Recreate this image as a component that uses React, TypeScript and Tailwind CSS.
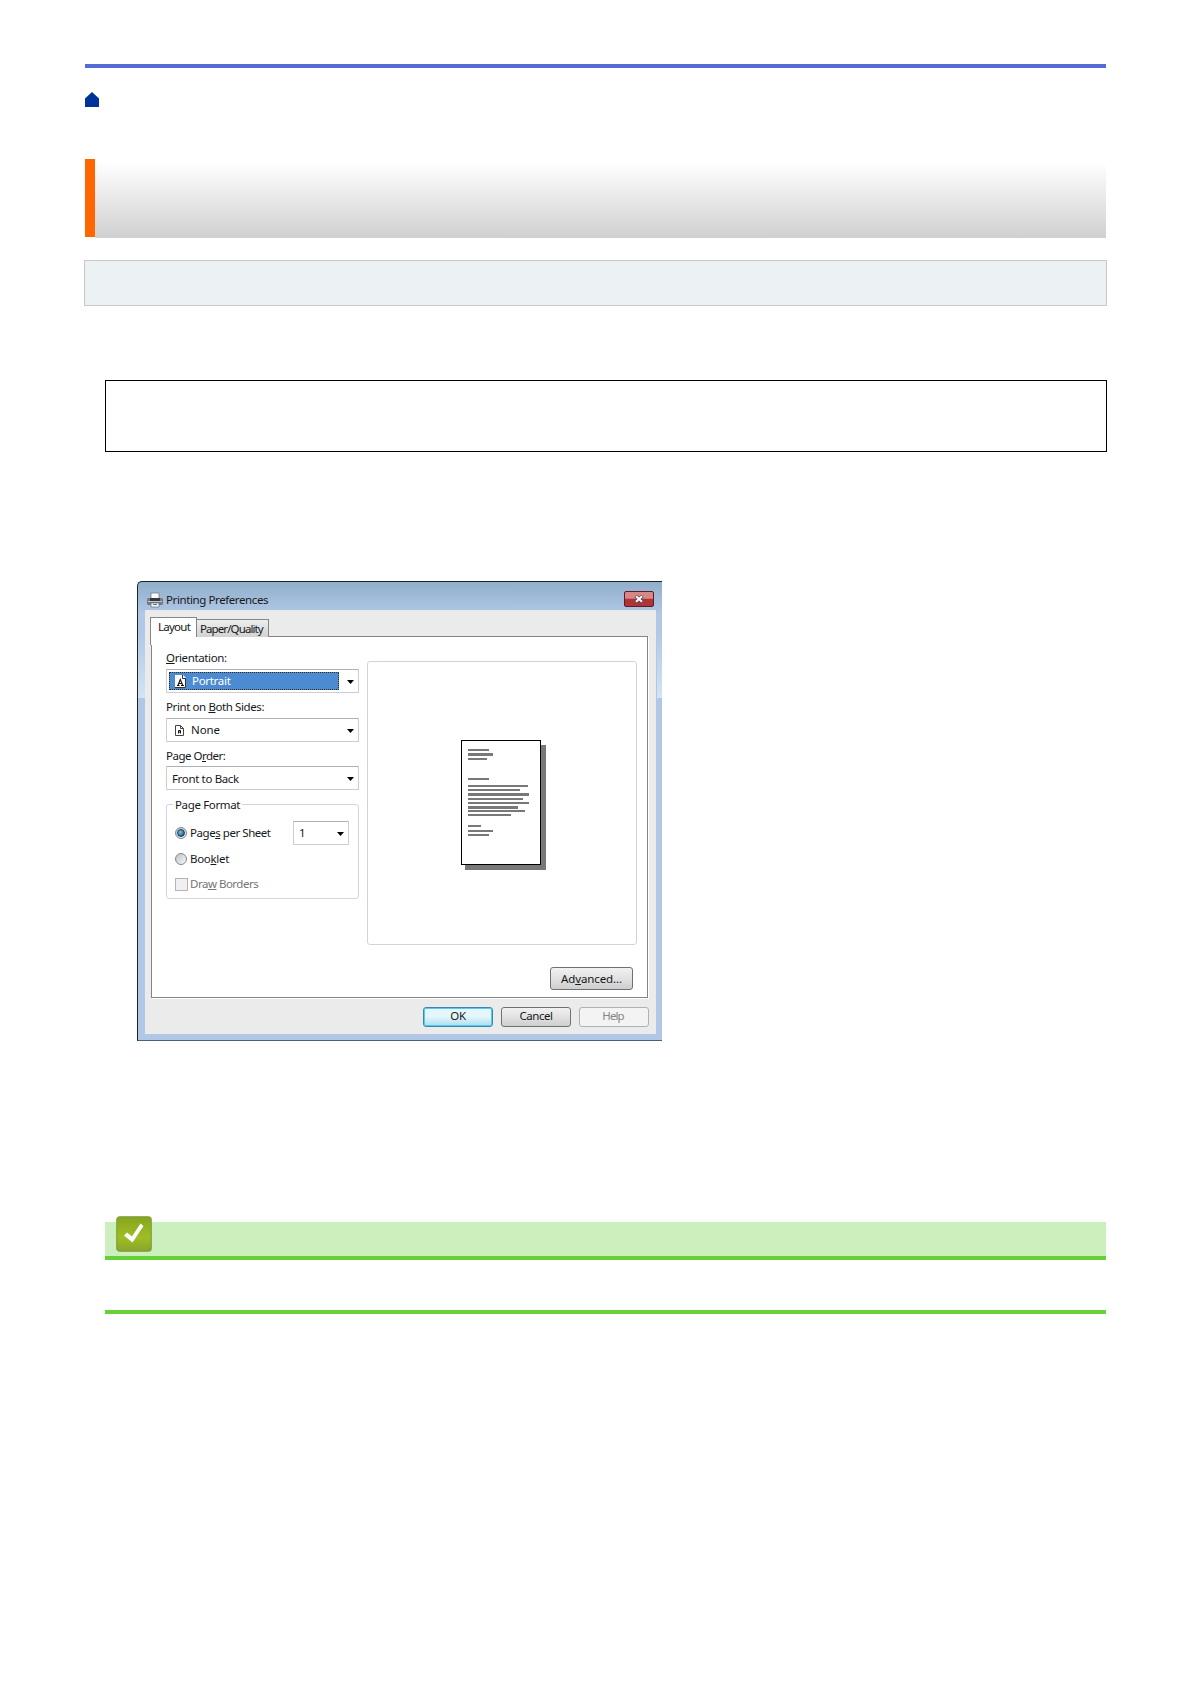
import type { ReactNode } from 'react';
import clsx from 'clsx';

// grey text lines on the preview sheet: [top, width, height]
const previewLines = [
  [8, 21, 2], [12, 25, 3], [17, 19, 2],
  [37, 21, 2],
  [44, 60, 2], [48, 52, 2], [52, 61, 3], [57, 55, 2], [61, 61, 2], [65, 50, 3], [69, 57, 2], [73, 43, 2],
  [84, 13, 2], [89, 25, 2], [93, 21, 2],
];

function PrinterIcon() {
  return (
    <svg width="16" height="16" viewBox="0 0 16 16">
      <rect x="4" y="1" width="8" height="6" fill="#f8fafb" stroke="#77808a" strokeWidth=".8" />
      <path d="M1 6h2v2h10V6h2l1 1v5l-1 1H1l-1-1V7z" fill="#777b80" />
      <path d="M3 6h10v3H3z" fill="#35393e" />
      <path d="M1 9h14v1H1z" fill="#c4c8cc" />
      <path d="M4 11h8v4H4z" fill="#f1f6fa" stroke="#59636c" strokeWidth=".6" />
      <path d="M6 12h4v1H6z" fill="#55809b" />
    </svg>
  );
}

function PageIcon({ small }: { small?: boolean }) {
  if (small) {
    return (
      <svg width="9" height="11" viewBox="0 0 9 11">
        <path d="M.5.5h5l3 3v7h-8z" fill="#fff" stroke="#444" />
        <path d="M5.5.5v3h3" fill="none" stroke="#444" />
        <path d="M3.5 8.5V5.5h2v3M3.5 7h2" fill="none" stroke="#111" />
      </svg>
    );
  }
  return (
    <svg width="11" height="13" viewBox="0 0 11 13">
      <path d="M0 0h8l3 3v10H0z" fill="#fff" />
      <path d="M7.5 0v3.5H11M10.5 3v9.5H0" fill="none" stroke="#333" />
      <path d="M2 10.5h2.5M6 10.5h3M3 10.2L5.3 4.5l2.4 5.7M4 8.5h3" fill="none" stroke="#111" strokeWidth="1.1" />
    </svg>
  );
}

function Combo({ children, className }: { children: ReactNode; className?: string }) {
  return (
    <div className={clsx('flex h-6 items-center justify-between rounded-[1px] border border-[#cbcdd2] border-t-[#aeb0b6] bg-white pr-1', className)}>
      {children}
      <svg className="mt-px" width="7" height="4" viewBox="0 0 7 4"><path d="M0 0h7L3.5 4z" fill="#000" /></svg>
    </div>
  );
}

function Radio({ checked }: { checked?: boolean }) {
  return (
    <span className="flex size-3 items-center justify-center rounded-full border border-[#858789] bg-linear-to-br from-[#bfc2c5] to-[#f8f8f8]">
      {checked && <span className="size-2 rounded-full border border-[#173f61] bg-radial-[at_35%_35%] from-[#74c5e8] to-[#123e65]" />}
    </span>
  );
}

function Button({ children, className }: { children: ReactNode; className?: string }) {
  return (
    <button className={clsx('flex items-center justify-center rounded-[3px] border', className ?? 'border-[#707070] bg-linear-to-b from-[#f1f1f1] via-[#e2e2e2] via-50% to-[#cecece]')}>
      {children}
    </button>
  );
}

function PrintingPreferences() {
  return (
    <div className="relative ml-[137px] flex h-[460px] w-[525px] flex-col rounded-tl-[5px] border border-r-0 border-[#17242c] border-b-[#466372] bg-[#b0c8e5] pl-[7px] pr-[6px] font-['Noto_Sans',sans-serif] text-[11.5px] leading-4 text-[#17181a] bg-linear-to-b from-[#91aecb] to-[#b0c8e5] to-7%">
      {/* glass reflections on the side frames */}
      <span className="absolute top-[50px] left-0 h-[66px] w-[7px] bg-linear-to-b from-transparent to-[#d3e4f3]" />
      <span className="absolute top-[50px] right-0 h-[66px] w-[5px] bg-linear-to-b from-transparent to-[#d3e4f3]" />

      <div className="flex h-7 shrink-0 items-center pt-2 pl-0.5">
        <PrinterIcon />
        <span className="ml-[3px] tracking-[-0.4px]">Printing Preferences</span>
        <div className="mt-[-2px] mr-[2px] ml-auto flex h-4 w-[30px] items-center justify-center rounded-[2px] border border-[#5b1d2b] bg-linear-to-b from-[#d98786] from-45% to-[#ae3435] to-50%">
          <svg width="10" height="8" viewBox="0 0 10 8">
            <path d="M1.5 1l7 6M8.5 1l-7 6" stroke="#5a4858" strokeWidth="3.5" />
            <path d="M2 1.3l6 5.4M8 1.3L2 6.7" stroke="#fff" strokeWidth="2" />
          </svg>
        </div>
      </div>

      <div className="flex h-[424px] flex-col bg-[#ebebeb] pt-[7px] pr-[7px] pl-[5px]">
        <div className="relative z-10 flex h-5 items-end">
          <div className="-mb-2 h-[28px] w-[47px] border border-b-0 border-[#858688] bg-white pt-px pl-[7px] tracking-[-0.75px] [clip-path:polygon(0_0,100%_0,100%_20px,46px_20px,46px_100%,0_100%)]">Layout</div>
          <div className="h-[18px] w-[72px] border border-b-0 border-l-0 border-[#858688] bg-linear-to-b from-[#eeeeee] to-[#d2d2d2] pt-px pl-[3px] tracking-[-0.9px]">Paper/Quality</div>
        </div>
        <div className="-mt-px ml-px h-[362px] w-[497px] shrink-0 border border-[#858589] bg-white shadow-[1px_1px_0_#fff]">
          <div className="flex pt-6 pl-[14px]">
            <div className="flex w-[193px] flex-col">
              <div className="-mt-[11px] h-[19px] tracking-[-0.37px]"><u>O</u>rientation:</div>
              <Combo>
                <div className="ml-0.5 flex h-[18px] w-[170px] items-center gap-1.5 border border-dotted border-[#332d20] bg-[#4c8ad1] pl-[5px] tracking-[-0.3px] text-white">
                  <PageIcon />Portrait
                </div>
              </Combo>
              <div className="mt-[6px] h-[19px] tracking-[-0.4px]">Print on <u>B</u>oth Sides:</div>
              <Combo>
                <div className="flex items-center gap-[7px] pl-2 tracking-[-0.1px]"><PageIcon small />None</div>
              </Combo>
              <div className="mt-[5px] h-[19px] pt-px tracking-[-0.5px]">Page O<u>r</u>der:</div>
              <Combo><span className="pt-px pl-[5px] tracking-[-0.35px]">Front to Back</span></Combo>
              <fieldset className="mt-[6px] h-[103px] rounded-[3px] border border-[#d3d7d9] pl-2">
                <legend className="-ml-[2px] px-0.5 pt-px tracking-[-0.35px]">Page Format</legend>
                <div className="mt-2 flex h-6 items-center">
                  <Radio checked />
                  <span className="ml-[3px] w-[107px] tracking-[-0.45px]">Page<u>s</u> per Sheet</span>
                  <Combo className="-ml-[4px] w-14"><span className="pl-[5px]">1</span></Combo>
                </div>
                <div className="mt-[6px] flex h-4 items-center gap-[3px] tracking-[-0.3px]"><Radio /><span>Boo<u>k</u>let</span></div>
                <div className="mt-[9px] flex h-4 items-center gap-0.5 tracking-[-0.5px] text-[#757575]">
                  <span className="size-[13px] border border-[#b5b5b5] bg-[#f0f0f0]" />
                  <span>Dra<u>w</u> Borders</span>
                </div>
              </fieldset>
            </div>
            <div className="ml-2 h-[284px] w-[270px] rounded-[3px] border border-[#ced4d8] pt-[78px] pl-[93px]">
              <div className="relative h-[125px] w-20 border border-black bg-white">
                {previewLines.map(([top, width, height]) => (
                  <span key={top} className="absolute left-[6px] bg-[#787878]" style={{ top, width, height }} />
                ))}
                <span className="absolute top-1 -right-[6px] h-[125px] w-[5px] bg-[#787878]" />
                <span className="absolute -right-[6px] -bottom-[6px] h-[5px] w-[81px] bg-[#787878]" />
              </div>
            </div>
          </div>
          <div className="mt-[22px] mr-[14px] flex h-[23px] justify-end">
            <Button><span className="w-[81px] tracking-[-0.1px]">Ad<u>v</u>anced...</span></Button>
          </div>
        </div>
        <div className="mt-[9px] flex h-5 justify-end gap-2">
          <Button className="w-[70px] border-[#3889a7] bg-linear-to-b from-[#e6f7fc] from-45% to-[#a9dfef] pb-0.5 tracking-[-0.4px] shadow-[inset_0_0_0_1px_#54cbed]">OK</Button>
          <Button className="w-[70px] border-[#707070] bg-linear-to-b from-[#f1f1f1] via-[#e2e2e2] via-50% to-[#cecece] pb-0.5 tracking-[-0.5px]">Cancel</Button>
          <Button className="w-[70px] border-[#afb2b5] bg-[#f3f3f3] pr-0.5 pb-0.5 tracking-[-0.9px] text-[#858585]">Help</Button>
        </div>
      </div>
    </div>
  );
}

export default function App() {
  return (
    <div className="flex h-[1684px] w-[1191px] flex-col bg-white pt-16">
      <div className="ml-[85px] h-1 w-[1021px] shrink-0 bg-[#556cd6]" />
      <svg className="mt-6 ml-[85px] shrink-0" width="14" height="15" viewBox="0 0 14 15">
        <path d="M0 6.5L7 0l7 6.5V15H0z" fill="#003399" />
      </svg>
      <div className="mt-[52px] flex h-[79px] shrink-0 pl-[85px]">
        <div className="h-[78px] w-[10px] bg-[#ff6600]" />
        <div className="w-[1011px] bg-linear-to-b from-white from-5% to-[#d0d0d0]" />
      </div>
      <div className="mt-[22px] ml-[84px] h-[46px] w-[1023px] shrink-0 border border-[#c6c8ca] bg-[#ecf1f3]" />
      <div className="mt-[74px] mb-[129px] ml-[105px] h-[72px] w-[1002px] shrink-0 border border-black" />
      <PrintingPreferences />
      <div className="mt-[181px] ml-[105px] h-[38px] w-[1001px] shrink-0 border-b-4 border-[#66d136] bg-[#cbefbd] pl-[11px]">
        <svg className="-mt-[6px]" width="36" height="36" viewBox="0 0 36 36">
          <defs>
            <linearGradient id="check" x1="0" y1="0" x2="0" y2="1">
              <stop offset="0" stopColor="#86a51f" />
              <stop offset=".6" stopColor="#a0bd24" />
              <stop offset="1" stopColor="#87a52c" />
            </linearGradient>
          </defs>
          <rect x=".8" y=".8" width="34.4" height="34.4" rx="3" fill="url(#check)" stroke="#819d38" strokeWidth="1.2" />
          <path d="M8 19.5l3-3 5 4 8.5-13 3 2.500-11 16.500z" fill="#fff" />
        </svg>
      </div>
      <div className="mt-[50px] ml-[105px] h-1 w-[1001px] shrink-0 bg-[#66d136]" />
    </div>
  );
}
